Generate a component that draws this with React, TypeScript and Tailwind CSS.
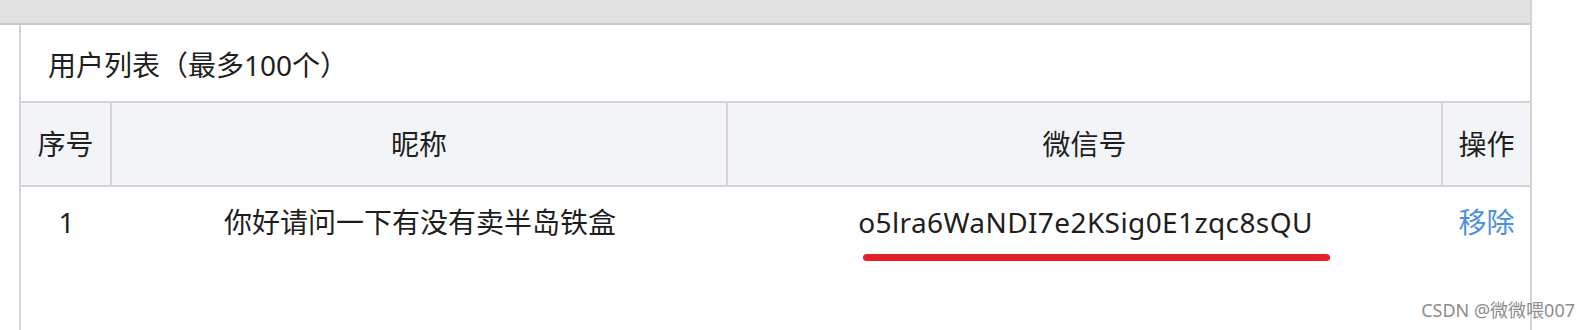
import React from "react";

const FONT = "font-['Noto_Sans','Noto_Sans_CJK_SC',sans-serif]";

const users = [
  { id: 1, nick: "你好请问一下有没有卖半岛铁盒", wx: "o5lra6WaNDI7e2KSig0E1zqc8sQU" },
];

export default function App() {
  return (
    <div className={"relative w-[1590px] h-[330px] overflow-hidden bg-white text-[#1e1e1e] " + FONT}>
      <div className="flex h-full w-[1532px] border-r-2 border-[#d4d4d6]">
        <div className="flex flex-1 flex-col">
          {/* top bar */}
          <div className="h-[25px] shrink-0 border-b-2 border-[#c9c9c9] bg-[#e1e1e1]" />

          {/* panel */}
          <div className="ml-[19px] flex flex-1 flex-col border-l-2 border-[#d4d4d6]">
            <div className="flex h-[78px] shrink-0 items-center border-b-2 border-[#d4d4d6] pl-[27px] pt-[3px] text-[28px]">
              用户列表（最多100个）
            </div>

            {/* table header */}
            <div className="flex h-[84px] shrink-0 border-b-2 border-[#d4d4d6] bg-[#f3f4f8] text-[28px]">
              <div className="flex w-[91px] items-center justify-center border-r-2 border-[#d4d4d6]">序号</div>
              <div className="flex w-[616px] items-center justify-center border-r-2 border-[#d4d4d6]">昵称</div>
              <div className="flex w-[715px] items-center justify-center border-r-2 border-[#d4d4d6]">微信号</div>
              <div className="flex flex-1 items-center justify-center">操作</div>
            </div>

            {/* rows */}
            {users.map((u) => (
              <div key={u.id} className="flex pt-[14px] text-[28px] leading-[42px]">
                <div className="w-[91px] text-center">{u.id}</div>
                <div className="w-[616px] text-center">{u.nick}</div>
                <div className="w-[715px] text-center tracking-[0.4px]">{u.wx}</div>
                <div className="flex-1 text-center text-[#4a90db]">移除</div>
              </div>
            ))}
          </div>
        </div>
      </div>

      {/* red annotation stroke */}
      <div className="absolute left-[863px] top-[254px] h-[7px] w-[467px] rounded-full bg-[#e3212a]" />

      {/* watermark */}
      <div className="absolute right-[15px] top-[298px] text-[18px] leading-[24px] text-[#8c8c8c]">CSDN @微微喂007</div>
    </div>
  );
}
